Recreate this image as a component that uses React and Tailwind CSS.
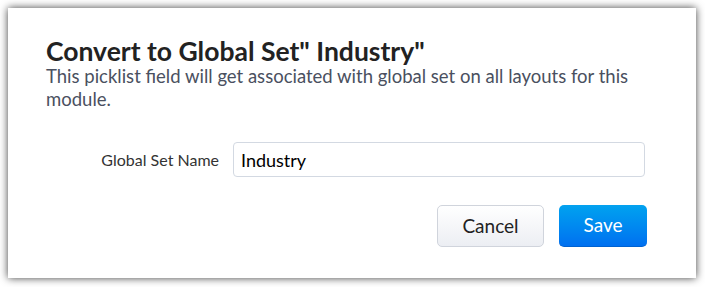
import React, { useState } from "react";

const App = () => {
  const [name, setName] = useState("Industry");

  return (
    <div className="w-[705px] h-[287px] bg-white p-2 font-['Lato','Liberation_Sans',sans-serif]">
      <div className="h-[270px] w-[688px] bg-white shadow-[0_0_8px_rgba(0,0,0,0.75)] pl-[38px] pr-[48px] pt-[28px]">
        {/* HEADER */}
        <h1 className="text-[26.5px] leading-[30px] font-bold text-[#222]">
          Convert to Global Set" Industry"
        </h1>
        <p className="text-[18.5px] leading-[23px] text-[#4a5060] mt-[-1px]">
          This picklist field will get associated with global set on all layouts for this module.
        </p>

        {/* FIELD */}
        <div className="flex items-center mt-[31px]">
          <label className="w-[187px] pr-[14px] text-right text-[16px] text-[#333]">
            Global Set Name
          </label>
          <input
            value={name}
            onChange={(e) => setName(e.target.value)}
            className="w-[412px] h-[35px] border border-[#d3d9e2] rounded-[4px] px-[7px] text-[18px] text-black outline-none"
          />
        </div>

        {/* ACTIONS */}
        <div className="flex justify-end gap-[15px] mt-[28px] pr-[1px]">
          <button className="w-[107px] h-[42px] rounded-[5px] border border-[#d0d4dc] bg-gradient-to-b from-white to-[#eceef3] text-[19px] text-[#222]">
            Cancel
          </button>
          <button className="w-[88px] h-[42px] rounded-[5px] bg-gradient-to-b from-[#04a2ef] to-[#0070f0] border-b border-[#0062d0] text-[19px] text-white">
            Save
          </button>
        </div>
      </div>
    </div>
  );
};

export default App;
